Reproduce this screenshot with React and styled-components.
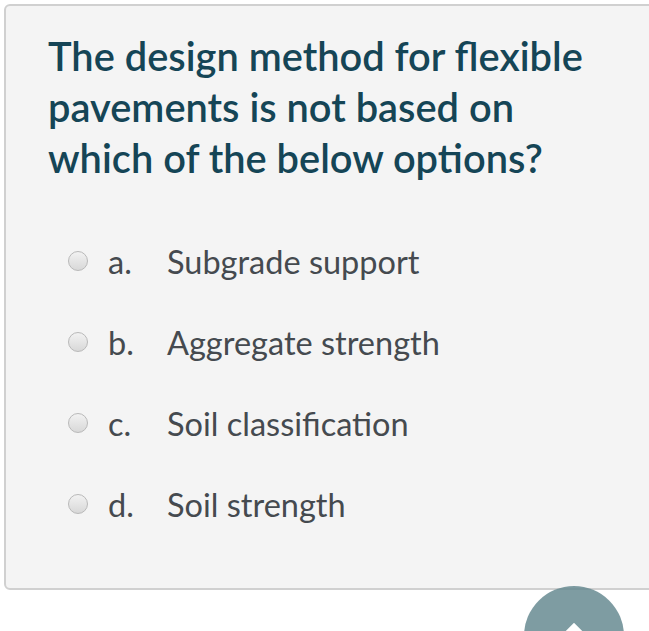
import styled, { createGlobalStyle } from "styled-components";

const GlobalStyle = createGlobalStyle`
  html, body {
    margin: 0;
    padding: 0;
    background: #ffffff;
    overflow: hidden;
  }
  body {
    font-family: Lato, "Open Sans", sans-serif;
  }
`;

const Page = styled.main`
  width: 649px;
  height: 631px;
  position: relative;
  overflow: hidden;
  padding: 4px 0 0 4px;
  box-sizing: border-box;
`;

const Card = styled.section`
  width: 680px;
  height: 586px;
  box-sizing: border-box;
  background: #f4f4f4;
  border: 2px solid #d0d0d0;
  border-radius: 6px;
  padding: 24px 44px 0 42px;
`;

const Question = styled.h2`
  margin: 0;
  width: 560px;
  font-size: 39.8px;
  line-height: 51px;
  font-weight: 600;
  color: #154556;
`;

const Options = styled.ul`
  list-style: none;
  margin: 58px 0 0 0;
  padding: 0 0 0 20px;
  display: flex;
  flex-direction: column;
  gap: 41px;
`;

const Option = styled.li`
  display: flex;
  align-items: center;
  height: 40px;
  font-size: 32.5px;
  color: #454a4f;
`;

const Radio = styled.span`
  width: 20px;
  height: 20px;
  border-radius: 50%;
  box-sizing: border-box;
  border: 1px solid #b9b9b9;
  background: linear-gradient(#f2f2f2, #d8d8d8);
  flex: none;
`;

const Letter = styled.span`
  width: 59px;
  margin-left: 20px;
  flex: none;
`;

const Label = styled.span``;

const ScrollTop = styled.button`
  position: absolute;
  left: 524px;
  top: 586px;
  width: 100px;
  height: 100px;
  border-radius: 50%;
  border: none;
  padding: 0;
  background: rgba(98, 134, 142, 0.82);
  display: flex;
  justify-content: center;
  align-items: flex-start;
  padding-top: 37px;
  box-sizing: border-box;
`;

const options = [
  ["a.", "Subgrade support"],
  ["b.", "Aggregate strength"],
  ["c.", "Soil classification"],
  ["d.", "Soil strength"],
];

const App = () => (
  <>
    <GlobalStyle />
    <Page>
      <Card>
        <Question>
          The design method for flexible pavements is not based on which of the
          below options?
        </Question>
        <Options>
          {options.map(([letter, text]) => (
            <Option key={letter}>
              <Radio />
              <Letter>{letter}</Letter>
              <Label>{text}</Label>
            </Option>
          ))}
        </Options>
      </Card>
      <ScrollTop aria-label="Back to top">
        <svg width="34" height="20" viewBox="0 0 34 20">
          <path d="M3 18 L17 4 L31 18" fill="none" stroke="#fff" strokeWidth="6" />
        </svg>
      </ScrollTop>
    </Page>
  </>
);

export default App;
